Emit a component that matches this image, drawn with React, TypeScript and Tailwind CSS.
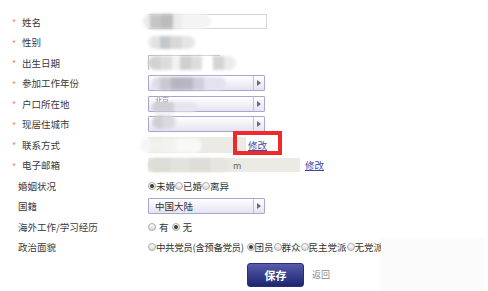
import React from "react";

const font = { fontFamily: '"Noto Sans CJK SC", "Noto Sans", sans-serif' };

function Radio({ checked }: { checked?: boolean }) {
  return (
    <span className="inline-flex w-[8px] h-[8px] rounded-full border border-[#a9a9a9] bg-gradient-to-b from-[#ffffff] to-[#d9d9d9] items-center justify-center shrink-0">
      {checked && <span className="w-[4px] h-[4px] rounded-full bg-[#3d3d3d]" />}
    </span>
  );
}

function Select({ text, children }: { text?: string; children?: React.ReactNode }) {
  return (
    <div className="relative flex w-[117px] h-[16px] border border-[#aaa5cf] bg-gradient-to-b from-[#ffffff] to-[#e5e3f1] rounded-[1px]">
      <div className="flex-1 flex items-center pl-[6px] text-[9.5px] text-[#333]">{text}</div>
      <div className="w-[11px] border-l border-[#c3c0dc] flex items-center justify-center">
        <span className="w-0 h-0 border-y-[3px] border-y-transparent border-l-[4px] border-l-[#6a6a7a]" />
      </div>
      {children}
    </div>
  );
}

function Label({ text, req }: { text: string; req?: boolean }) {
  return req ? (
    <div className="w-[148px] flex items-center pl-[12px] shrink-0">
      <span className="w-[10px] text-[#f2885a] text-[9px] leading-none pt-[2px]">*</span>
      <span className="text-[9.5px] text-[#3a3a3a]">{text}</span>
    </div>
  ) : (
    <div className="w-[148px] flex items-center pl-[18px] shrink-0">
      <span className="text-[9.5px] text-[#3a3a3a]">{text}</span>
    </div>
  );
}

function Blob({ cls, tiles }: { cls: string; tiles: [number, string][] }) {
  return (
    <div className={"absolute flex rounded-full overflow-hidden blur-[1.5px] " + cls}>
      {tiles.map(([w, c], i) => (
        <div key={i} style={{ width: w, background: c }} className="h-full" />
      ))}
    </div>
  );
}

export default function App() {
  return (
    <div className="relative w-[488px] h-[291px] bg-white overflow-hidden" style={font}>
      <div className="flex flex-col pt-[11.5px]">
        {/* 姓名 */}
        <div className="flex h-[20.5px] items-center">
          <Label text="姓名" req />
          <div className="relative w-[119px] h-[15px] border border-[#d6d6d6] bg-white">
            <Blob cls="-left-[6px] -top-[1px] w-[68px] h-[15px]" tiles={[[7, "#ebebeb"], [11, "#c6c6c6"], [12, "#bcbcbc"], [9, "#ececec"], [29, "#f4f4f4"]]} />
          </div>
        </div>
        {/* 性别 */}
        <div className="flex h-[20.5px] items-center">
          <Label text="性别" req />
          <div className="relative w-[119px] h-[13px]">
            <Blob cls="left-[0px] top-0 w-[47px] h-[13px]" tiles={[[4, "#ece9e2"], [8, "#e2e2e2"], [10, "#c2c7cc"], [12, "#d8d8d8"], [13, "#e6e6e6"]]} />
          </div>
        </div>
        {/* 出生日期 */}
        <div className="flex h-[20.5px] items-center">
          <Label text="出生日期" req />
          <div className="relative w-[119px] h-[15px]">
            <div className="absolute left-0 top-0 w-[72px] h-[15px] border-t border-l border-[#bdbdbd]" />
            <Blob cls="left-[0px] top-[1px] w-[88px] h-[14px]" tiles={[[12, "#d2d2d2"], [12, "#dcdcdc"], [8, "#f2f2f2"], [11, "#cfcfcf"], [11, "#dcdcdc"], [11, "#ffffff"], [11, "#d4d4d4"], [12, "#ececec"]]} />
          </div>
        </div>
        {/* 参加工作年份 */}
        <div className="flex h-[20.5px] items-center">
          <Label text="参加工作年份" req />
          <Select>
            <Blob cls="left-[3px] top-[1px] w-[74px] h-[13px]" tiles={[[8, "#dedce6"], [11, "#c9c7d0"], [11, "#b8b5c2"], [11, "#b9b5c3"], [11, "#cfcddd"], [22, "#e4e2ef"]]} />
          </Select>
        </div>
        {/* 户口所在地 */}
        <div className="flex h-[20.5px] items-center">
          <Label text="户口所在地" req />
          <Select>
            <span className="absolute left-[6px] top-[0px] text-[7px] leading-none text-[#888] blur-[0.6px]">北京</span>
            <Blob cls="left-[3px] top-[5px] w-[45px] h-[10px]" tiles={[[22, "#cfcfd6"], [23, "#e6e5ee"]]} />
          </Select>
        </div>
        {/* 现居住城市 */}
        <div className="flex h-[20.5px] items-center">
          <Label text="现居住城市" req />
          <Select>
            <Blob cls="left-[3px] -top-[2px] w-[24px] h-[14px]" tiles={[[11, "#cfcfd4"], [13, "#dadade"]]} />
          </Select>
        </div>
        {/* 联系方式 */}
        <div className="flex h-[20.5px] items-center">
          <Label text="联系方式" req />
          <div className="relative w-[98px] h-[16px] bg-[#ebeae4]">
            <Blob cls="-left-[8px] top-[1px] w-[62px] h-[15px]" tiles={[[10, "#f6f6f4"], [12, "#f0f0ec"], [14, "#f3f3f0"], [26, "#f8f8f6"]]} />
          </div>
          <a className="ml-[2px] text-[9.5px] text-[#4446a6] underline">修改</a>
        </div>
        {/* 电子邮箱 */}
        <div className="flex h-[20.5px] items-center">
          <Label text="电子邮箱" req />
          <div className="relative w-[152px] h-[14px] bg-[#ebeae4] flex items-center">
            <Blob cls="left-0 top-0 w-[82px] h-[14px]" tiles={[[22, "#dcdcd6"], [20, "#e2e2dc"], [20, "#dedcd6"], [20, "#e6e5df"]]} />
            <span className="absolute left-[85px] text-[9px] text-[#666] leading-none">m</span>
          </div>
          <a className="ml-[5px] text-[9.5px] text-[#4446a6] underline">修改</a>
        </div>
        {/* 婚姻状况 */}
        <div className="flex h-[20.5px] items-center">
          <Label text="婚姻状况" />
          <div className="flex items-center text-[9.5px] text-[#333]">
            <Radio checked />
            <span>未婚</span>
            <Radio />
            <span>已婚</span>
            <Radio />
            <span>离异</span>
          </div>
        </div>
        {/* 国籍 */}
        <div className="flex h-[20.5px] items-center">
          <Label text="国籍" />
          <Select text="中国大陆" />
        </div>
        {/* 海外 */}
        <div className="flex h-[20.5px] items-center">
          <Label text="海外工作/学习经历" />
          <div className="flex items-center gap-[3px] text-[9.5px] text-[#333]">
            <Radio />
            <span>有</span>
            <Radio checked />
            <span>无</span>
          </div>
        </div>
        {/* 政治面貌 */}
        <div className="flex h-[20.5px] items-center">
          <Label text="政治面貌" />
          <div className="flex items-center text-[9.5px] text-[#333] whitespace-nowrap">
            <Radio />
            <span className="tracking-[-0.4px]">中共党员(含预备党员)</span>
            <span className="w-[3px]" />
            <Radio checked />
            <span>团员</span>
            <Radio />
            <span>群众</span>
            <Radio />
            <span>民主党派</span>
            <Radio />
            <span>无党派人士</span>
          </div>
        </div>
        {/* buttons */}
        <div className="flex items-center mt-[5.5px] pl-[247px]">
          <button className="w-[57px] h-[24px] rounded-[3px] border border-[#2b2f7a] bg-gradient-to-b from-[#575cab] to-[#1f2470] text-white text-[11px] font-bold">
            保存
          </button>
          <span className="ml-[8px] text-[9px] text-[#8a8a8a]">返回</span>
        </div>
      </div>

      {/* red highlight box */}
      <div className="absolute left-[233px] top-[131px] w-[49px] h-[24px] border-[4px] border-[#ee2a2b]" />

      {/* watermark overlay */}
      <div className="absolute left-[381px] top-[238px] w-[104px] h-[53px] bg-[#fbfbfb]" />
    </div>
  );
}
